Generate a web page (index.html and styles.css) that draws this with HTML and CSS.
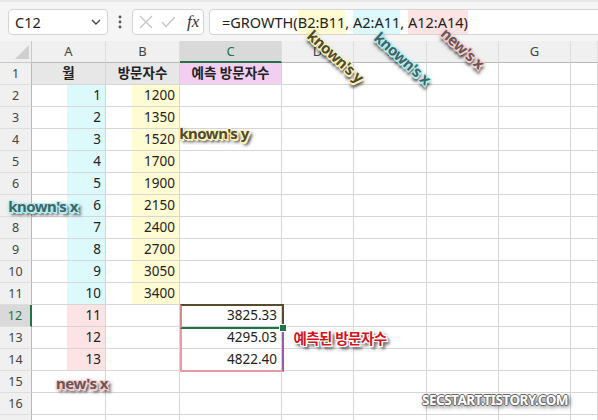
FILE: index.html
```html
<!DOCTYPE html>
<html>
<head>
<meta charset='UTF-8'>
<link rel="stylesheet" href="styles.css">
</head>
<body>
<div class='page'>

<div class='formula-bar'>
  <div class='name-box'>
    <span>C12</span>
    <svg width='10' height='6' viewBox='0 0 10 6'><polyline points='1,1 5,5 9,1' fill='none' stroke='#444' stroke-width='1.4'/></svg>
  </div>
  <svg class='dots' width='4' height='14' viewBox='0 0 4 14'><circle cx='2' cy='2' r='1.4'/><circle cx='2' cy='7' r='1.4'/><circle cx='2' cy='12' r='1.4'/></svg>
  <div class='fx-box'>
    <svg width='14' height='14' viewBox='0 0 14 14'><path d='M1 1 L13 13 M13 1 L1 13' stroke='#c4c4c4' stroke-width='1.3'/></svg>
    <svg width='15' height='12' viewBox='0 0 15 12'><polyline points='1,6 5,10.5 14,1' fill='none' stroke='#c4c4c4' stroke-width='1.3'/></svg>
    <span class='fx'>fx</span>
  </div>
  <div class='formula'>=GROWTH(<span class='hl-y'>B2:B11</span>, <span class='hl-x'>A2:A11</span>, <span class='hl-p'>A12:A14)</span></div>
</div>

<div class='sheet'>
  <div class='corner'></div>
  <div class='ch'>A</div><div class='ch'>B</div><div class='ch sel'>C</div><div class='ch'>D</div><div class='ch'>E</div><div class='ch'>F</div><div class='ch'>G</div><div class='ch'></div>

  <div class='rh'>1</div><div class='c head'>월</div><div class='c head'>방문자수</div><div class='c head pinkhead'>예측 방문자수</div><div class='c'></div><div class='c'></div><div class='c'></div><div class='c'></div><div class='c'></div>
  <div class='rh'>2</div><div class='c num fx-a'>1</div><div class='c num fy-b'>1200</div><div class='c'></div><div class='c'></div><div class='c'></div><div class='c'></div><div class='c'></div><div class='c'></div>
  <div class='rh'>3</div><div class='c num fx-a'>2</div><div class='c num fy-b'>1350</div><div class='c'></div><div class='c'></div><div class='c'></div><div class='c'></div><div class='c'></div><div class='c'></div>
  <div class='rh'>4</div><div class='c num fx-a'>3</div><div class='c num fy-b'>1520</div><div class='c'></div><div class='c'></div><div class='c'></div><div class='c'></div><div class='c'></div><div class='c'></div>
  <div class='rh'>5</div><div class='c num fx-a'>4</div><div class='c num fy-b'>1700</div><div class='c'></div><div class='c'></div><div class='c'></div><div class='c'></div><div class='c'></div><div class='c'></div>
  <div class='rh'>6</div><div class='c num fx-a'>5</div><div class='c num fy-b'>1900</div><div class='c'></div><div class='c'></div><div class='c'></div><div class='c'></div><div class='c'></div><div class='c'></div>
  <div class='rh'></div><div class='c num fx-a'>6</div><div class='c num fy-b'>2150</div><div class='c'></div><div class='c'></div><div class='c'></div><div class='c'></div><div class='c'></div><div class='c'></div>
  <div class='rh'>8</div><div class='c num fx-a'>7</div><div class='c num fy-b'>2400</div><div class='c'></div><div class='c'></div><div class='c'></div><div class='c'></div><div class='c'></div><div class='c'></div>
  <div class='rh'>9</div><div class='c num fx-a'>8</div><div class='c num fy-b'>2700</div><div class='c'></div><div class='c'></div><div class='c'></div><div class='c'></div><div class='c'></div><div class='c'></div>
  <div class='rh'>10</div><div class='c num fx-a'>9</div><div class='c num fy-b'>3050</div><div class='c'></div><div class='c'></div><div class='c'></div><div class='c'></div><div class='c'></div><div class='c'></div>
  <div class='rh'>11</div><div class='c num fx-a'>10</div><div class='c num fy-b'>3400</div><div class='c'></div><div class='c'></div><div class='c'></div><div class='c'></div><div class='c'></div><div class='c'></div>
  <div class='rh sel'>12</div><div class='c num fp-a'>11</div><div class='c'></div><div class='c num'>3825.33</div><div class='c'></div><div class='c'></div><div class='c'></div><div class='c'></div><div class='c'></div>
  <div class='rh'>13</div><div class='c num fp-a'>12</div><div class='c'></div><div class='c num'>4295.03</div><div class='c'></div><div class='c'></div><div class='c'></div><div class='c'></div><div class='c'></div>
  <div class='rh'>14</div><div class='c num fp-a'>13</div><div class='c'></div><div class='c num'>4822.40</div><div class='c'></div><div class='c'></div><div class='c'></div><div class='c'></div><div class='c'></div>
  <div class='rh'>15</div><div class='c'></div><div class='c'></div><div class='c'></div><div class='c'></div><div class='c'></div><div class='c'></div><div class='c'></div><div class='c'></div>
  <div class='rh'>16</div><div class='c'></div><div class='c'></div><div class='c'></div><div class='c'></div><div class='c'></div><div class='c'></div><div class='c'></div><div class='c'></div>
  <div class='rh'></div><div class='c'></div><div class='c'></div><div class='c'></div><div class='c'></div><div class='c'></div><div class='c'></div><div class='c'></div><div class='c'></div>

  <!-- spill range and active cell -->
  <div class='range'></div>
  <div class='active'><span class='handle'></span></div>
</div>

<!-- annotations -->
<div class='note note-y tilt' style='left:336px; top:56px'>known's y</div>
<div class='note note-x tilt' style='left:403px; top:58px'>known's x</div>
<div class='note note-p tilt' style='left:463px; top:48px'>new's x</div>
<div class='note note-y' style='left:214px; top:133px'>known's y</div>
<div class='note note-x' style='left:43px; top:206px'>known's x</div>
<div class='note note-p' style='left:82px; top:383px'>new's x</div>
<div class='note note-red' style='left:340px; top:337px'>예측된 방문자수</div>
<div class='note mark' style='left:495px; top:400px'>SECSTART.TISTORY.COM</div>

</div>
</body>
</html>
```

FILE: styles.css
```css
/* Variables */

:root {
    --grid-line: #d6d6d6;
    --head-bg: #f0f0f0;
    --head-line: #c9c9c9;
    --head-text: #444;
    --sel-bg: #d9d9d9;
    --green: #217346;
    --cyan: #dcf9fc;
    --yellow: #fffbd3;
    --pink: #fde3e3;
}

* {
    margin: 0;
    padding: 0;
    box-sizing: border-box;
}

body {
    background: #fff;
    font-family: "Noto Sans", "Noto Sans CJK KR", sans-serif;
    color: #222;
}

.page {
    position: relative;
    width: 598px;
    height: 420px;
    overflow: hidden;
}

/* Formula bar */

.formula-bar {
    height: 41px;
    display: flex;
    align-items: center;
    padding-left: 8px;
    background: #f5f5f5;
    border-top: 2px solid #e9e9e9;
}

.name-box {
    width: 100px;
    height: 26px;
    background: #fff;
    border: 1px solid #d4d4d4;
    border-radius: 4px;
    display: flex;
    align-items: center;
    justify-content: space-between;
    padding: 0 6px 0 6px;
    font-size: 14.5px;
}

.dots {
    fill: #555;
    margin: 0 10px;
}

.fx-box {
    width: 72px;
    height: 26px;
    background: #fff;
    border: 1px solid #d4d4d4;
    border-radius: 4px;
    display: flex;
    align-items: center;
    padding-left: 6px;
    gap: 8px;
}

.fx {
    font-family: "Liberation Serif", serif;
    font-style: italic;
    font-size: 17px;
    color: #333;
    margin-left: 3px;
}

.formula {
    flex: 1;
    margin-left: 5px;
    margin-right: -6px;
    height: 26px;
    background: #fff;
    border: 1px solid #d4d4d4;
    border-radius: 4px;
    padding-left: 12px;
    font-size: 14.5px;
    line-height: 24px;
    white-space: nowrap;
}

.formula span {
    display: inline-block;
    line-height: 24px;
}

.hl-y { background: var(--yellow); }
.hl-x { background: var(--cyan); }
.hl-p { background: var(--pink); }

/* Sheet grid */

.sheet {
    position: relative;
    display: grid;
    grid-template-columns: 32px 74px 74px 102px 72px 73px 72px 72px 1fr;
    grid-auto-rows: 22px;
}

.corner, .ch, .rh {
    background: var(--head-bg);
    border-right: 1px solid var(--head-line);
    border-bottom: 1px solid var(--head-line);
    color: var(--head-text);
    font-size: 13px;
    text-align: center;
    line-height: 21px;
}

.corner {
    position: relative;
}

.corner::after {
    content: '';
    position: absolute;
    right: 2px;
    bottom: 3px;
    border-style: solid;
    border-width: 0 0 14px 14px;
    border-color: transparent transparent #cfcfcf transparent;
}

.ch {
    border-right-color: #dedede;
    border-bottom-color: #b8b8b8;
}

.ch.sel {
    background: var(--sel-bg);
    color: var(--green);
    border-bottom: 2px solid var(--green);
}

.rh {
    font-size: 12.5px;
    border-bottom-color: #dedede;
    border-right-color: #b8b8b8;
}

.rh.sel {
    background: var(--sel-bg);
    color: var(--green);
    border-right: 2px solid var(--green);
}

.c {
    border-right: 1px solid var(--grid-line);
    border-bottom: 1px solid var(--grid-line);
    font-size: 13.5px;
    line-height: 21px;
    padding: 0 4px;
    white-space: nowrap;
}

.num {
    text-align: right;
}

.head {
    background: #e7e7e7;
    text-align: center;
    font-weight: bold;
    font-size: 13.5px;
}

.pinkhead {
    background: #f2cef0;
}

/* Highlighter fills */

.fx-a { background: linear-gradient(to right, transparent 35px, var(--cyan) 35px); }
.fy-b { background: linear-gradient(to right, transparent 26px, var(--yellow) 26px); }
.fp-a { background: linear-gradient(to right, transparent 35px, var(--pink) 35px); }

/* Selection */

.range {
    position: absolute;
    left: 180px;
    top: 263px;
    width: 104px;
    height: 68px;
    border: 2px solid #e99aa5;
    border-right-color: #9a5aa8;
}

.active {
    position: absolute;
    left: 180px;
    top: 263px;
    width: 104px;
    height: 25px;
    border: 2px solid #5a4a2c;
    border-left-color: #c98f8f;
    border-bottom-color: var(--green);
}

.handle {
    position: absolute;
    right: -4px;
    bottom: -4px;
    width: 6px;
    height: 6px;
    background: var(--green);
    outline: 1px solid #fff;
}

/* Annotations */

.note {
    position: absolute;
    transform: translate(-50%, -50%);
    font-weight: bold;
    font-size: 15px;
    letter-spacing: -0.5px;
    white-space: nowrap;
}

.tilt {
    transform: translate(-50%, -50%) rotate(42deg);
}

.note-y {
    --ol: #fbf3b5;
    color: #4d4a33;
}

.note-x {
    --ol: #b4eff2;
    color: #416466;
}

.note-p {
    --ol: #f6d0d0;
    color: #6a5656;
}

.note-y, .note-x, .note-p {
    text-shadow: 1px 0 0 var(--ol), -1px 0 0 var(--ol), 0 1px 0 var(--ol), 0 -1px 0 var(--ol),
        1.5px 1.5px 0 var(--ol), -1px -1px 0 var(--ol), 1px -1px 0 var(--ol), -1px 1px 0 var(--ol),
        3px 3px 3px rgba(0, 0, 0, 0.75), 2px 2px 5px rgba(0, 0, 0, 0.5);
}

.note-red {
    color: #d3141c;
    font-size: 14.5px;
    text-shadow: 1px 0 0 #fff, -1px 0 0 #fff, 0 1px 0 #fff, 0 -1px 0 #fff,
        1.5px 1.5px 0 #fff, -1px -1px 0 #fff, 1px -1px 0 #fff, -1px 1px 0 #fff,
        3px 3px 3px rgba(0, 0, 0, 0.75), 2px 2px 5px rgba(0, 0, 0, 0.5);
}

.mark {
    color: #fff;
    font-size: 13.5px;
    letter-spacing: -0.5px;
    text-shadow: 1px 0 0 #666, -1px 0 0 #666, 0 1px 0 #666, 0 -1px 0 #666,
        2px 2px 4px rgba(0, 0, 0, 0.7);
}
```
